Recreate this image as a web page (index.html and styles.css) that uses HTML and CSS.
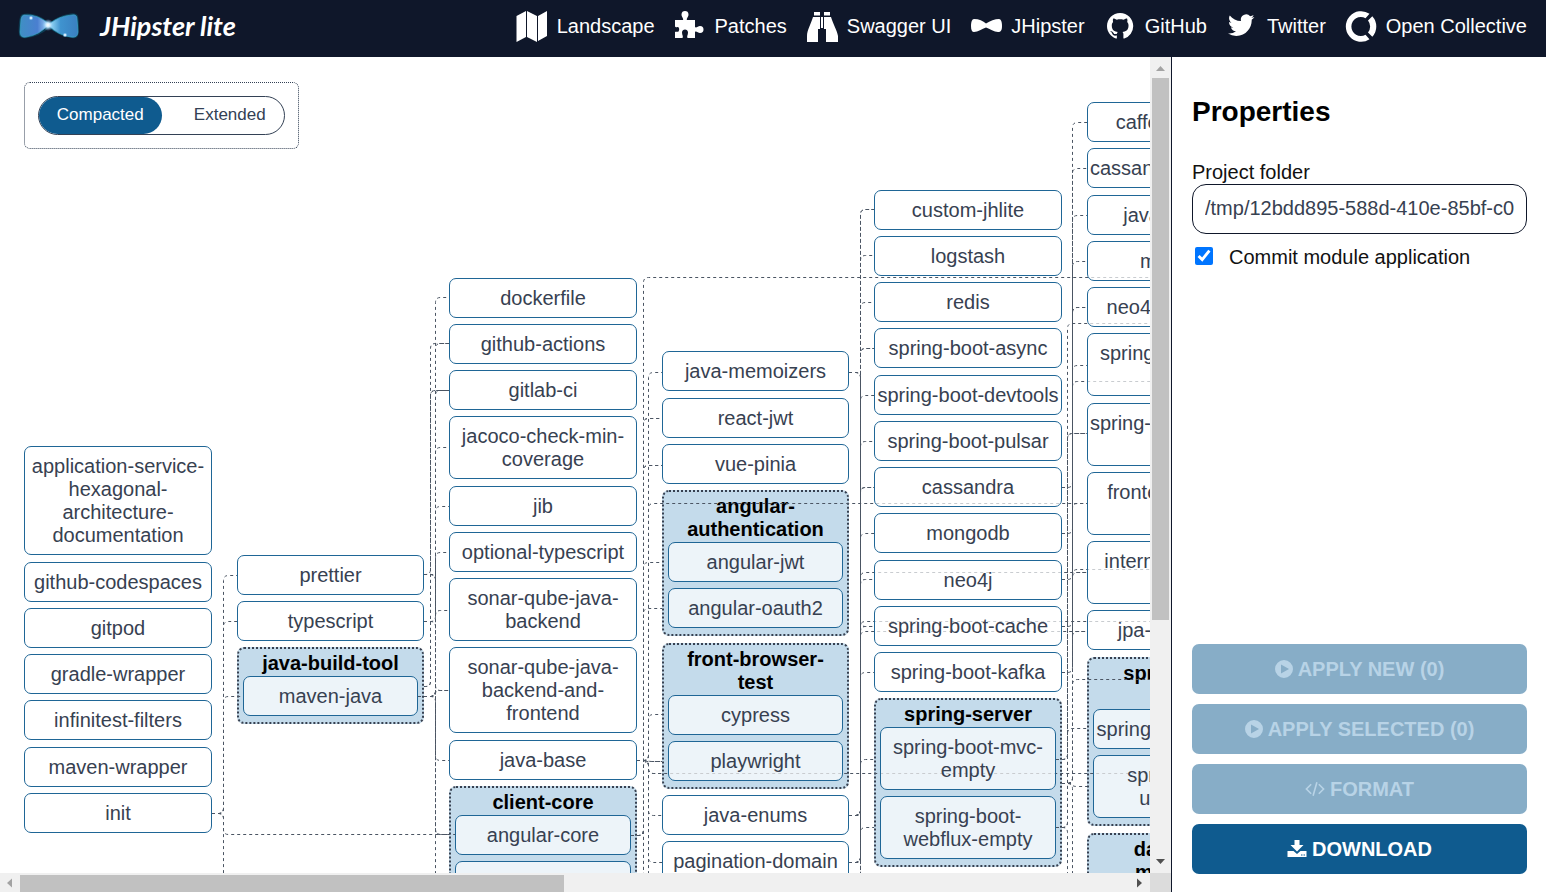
FILE: index.html
```html
<!DOCTYPE html>
<html lang="en">
<head>
<meta charset="utf-8">
<title>JHipster lite</title>
<link rel="stylesheet" href="styles.css">
</head>
<body>
<header class="header">
  <a class="brand" href="#">
    <svg class="brand-logo" viewBox="0 0 62 28" aria-hidden="true">
      <defs>
        <linearGradient id="wing-left" x1="0" y1="0" x2="1" y2="0"><stop offset="0" stop-color="#3f8fc4"/><stop offset=".6" stop-color="#4a7fd0"/><stop offset="1" stop-color="#a8d4f8"/></linearGradient>
        <linearGradient id="wing-right" x1="0" y1="0" x2="1" y2="0"><stop offset="0" stop-color="#a4e2fa"/><stop offset=".4" stop-color="#3f93cf"/><stop offset="1" stop-color="#3a7fc0"/></linearGradient>
        <radialGradient id="spark"><stop offset="0" stop-color="#fff"/><stop offset=".35" stop-color="#cdeafc"/><stop offset="1" stop-color="#6ab8f0" stop-opacity="0"/></radialGradient>
      </defs>
      <path d="M5 2Q9 1 14 2Q24 4 31 11Q40 4 50 2Q58 0 60 4Q62 14 60 23Q59 27 54 26Q42 25 31 16Q22 24 9 26Q3 27 1 23Q0 12 2 5Q3 2 5 2Z" fill="#0d4a63" opacity=".7"/>
      <path d="M6 3Q20 2 31 12Q22 23 8 25Q2 26 2 20L3 7Q4 3 6 3Z" fill="url(#wing-left)" stroke="#3aa6c8" stroke-width=".7"/>
      <path d="M31 12Q41 4 54 3Q59 2 59 7L60 20Q60 26 53 25Q40 23 31 14Z" fill="url(#wing-right)" stroke="#3aa6c8" stroke-width=".7"/>
      <circle cx="30" cy="13" r="6" fill="url(#spark)"/>
      <circle cx="13" cy="6" r="2.5" fill="url(#spark)"/>
      <circle cx="47" cy="23" r="2.5" fill="url(#spark)"/>
    </svg>
    <span class="brand-name">JHipster lite</span>
  </a>
  <nav class="menu">
    <a class="menu-link" href="#"><svg class="menu-icon" viewBox="0 0 32 32" aria-hidden="true"><path d="M0.500 6 10 1V27L0.500 32ZM11 1 21 6V32L11 27ZM22 6 31 1V26L22 31Z"/></svg>Landscape</a>
    <a class="menu-link" href="#"><svg class="menu-icon" viewBox="0 0 32 32" aria-hidden="true"><path d="M1 10H9C10 9 7.500 7 7.500 4.500C7.500 2 9 1 11 1S14.500 2 14.500 4.500C14.500 7 12 9 13 10H21V17C22 18.500 24 16 26 16C28.500 16 29.500 17.500 29.500 19.500S28.500 23 26 23C24 23 22 20.500 21 22V28H13.500C12.500 26 14 25 14 22.500C14 20.500 12.500 19.500 11 19.500S8 20.500 8 22.500C8 25 9.500 26 8.500 28H1V22C2 21 3.500 22.500 4.500 21.500C5.500 20 5.500 17.500 4 17C3 16.500 2 18 1 16.500Z"/></svg>Patches</a>
    <a class="menu-link" href="#"><svg class="menu-icon" viewBox="0 0 32 32" aria-hidden="true"><path d="M8 2H14V5.500H8ZM18 2H24V5.500H18ZM7 7H14V19H12V32H1V26C1 20 5 14 7 7ZM25 7H18V19H20V32H32V26C31 20 27 14 25 7ZM15 7H17V18H15Z"/></svg>Swagger UI</a>
    <a class="menu-link" href="#"><svg class="menu-icon" viewBox="0 0 32 32" aria-hidden="true"><path d="M4 9C9 9 13 11 16 13.500C20 11 25 9 29 9C31 9 32 12 32 16S31 22 28 22C24 22 20 19 16 17.500C12 19 8 22 4 22C2 22 1 20 1 16S2 9 4 9Z"/></svg>JHipster</a>
    <a class="menu-link" href="#"><svg class="menu-icon" viewBox="0 0 32 32" aria-hidden="true"><path transform="translate(3 3) scale(1.640)" d="M8 0C3.580 0 0 3.580 0 8c0 3.540 2.290 6.530 5.470 7.590.4.070.55-.17.55-.38 0-.19-.01-.82-.01-1.490-2.010.37-2.530-.49-2.690-.94-.09-.23-.48-.94-.82-1.130-.28-.15-.68-.52-.01-.53.63-.01 1.080.58 1.230.82.72 1.210 1.870.87 2.330.66.07-.52.28-.87.51-1.070-1.780-.2-3.640-.89-3.640-3.950 0-.87.31-1.590.82-2.150-.08-.2-.36-1.020.08-2.120 0 0 .67-.21 2.200.82.64-.18 1.320-.27 2-.27s1.360.09 2 .27c1.530-1.040 2.200-.82 2.200-.82.44 1.100.16 1.920.08 2.120.51.56.82 1.270.82 2.150 0 3.070-1.870 3.750-3.650 3.950.29.25.54.73.54 1.480 0 1.070-.01 1.930-.01 2.200 0 .21.15.46.55.38A8.010 8.010 0 0 0 16 8c0-4.420-3.580-8-8-8Z"/></svg>GitHub</a>
    <a class="menu-link" href="#"><svg class="menu-icon" viewBox="0 0 32 32" aria-hidden="true"><path transform="translate(2 2) scale(1.100)" d="M23.950 4.570a10 10 0 0 1-2.820.770 4.960 4.960 0 0 0 2.160-2.720 9.900 9.900 0 0 1-3.120 1.190 4.920 4.920 0 0 0-8.380 4.480C7.690 8.090 4.070 6.130 1.640 3.160a4.820 4.820 0 0 0-.67 2.480c0 1.710.87 3.210 2.190 4.100a4.900 4.900 0 0 1-2.230-.62v.06a4.920 4.920 0 0 0 3.950 4.830 5 5 0 0 1-2.210.080 4.940 4.940 0 0 0 4.600 3.420A9.870 9.870 0 0 1 0 19.540a14 14 0 0 0 7.550 2.210c9.050 0 14-7.500 14-13.980 0-.21 0-.42-.02-.63a9.940 9.940 0 0 0 2.460-2.550z"/></svg>Twitter</a>
    <a class="menu-link" href="#"><svg class="menu-icon" viewBox="0 0 32 32" aria-hidden="true"><path d="M24.500 3.700 20.500 8.200A9.500 9.500 0 1 0 20.500 24.800L24.500 29.300A15.300 15.300 0 1 1 24.500 3.700ZM27.300 6.200A15.300 15.300 0 0 1 27.300 26.800L23 22.500A9.500 9.500 0 0 0 23 10.500Z"/></svg>Open Collective</a>
  </nav>
</header>
<div class="layout">
  <main class="landscape">
    <div class="canvas" id="canvas">
      <svg class="links" id="links" aria-hidden="true"></svg>
      <div class="mode">
        <div class="mode-switch">
          <button class="mode-button mode-button-on" type="button" aria-pressed="true">Compacted</button>
          <button class="mode-button" type="button" aria-pressed="false">Extended</button>
        </div>
      </div>
    </div>
    <div class="bar bar-vertical" aria-hidden="true">
      <svg class="arrow arrow-idle" viewBox="0 0 21 21"><path d="M6 14 10.500 9 15 14Z"/></svg>
      <div class="track"><div class="thumb"></div></div>
      <svg class="arrow" viewBox="0 0 21 21"><path d="M6 7 10.500 12 15 7Z"/></svg>
    </div>
    <div class="bar bar-horizontal" aria-hidden="true">
      <svg class="arrow arrow-idle" viewBox="0 0 20 19"><path d="M12 5.500 7 10 12 14.500Z"/></svg>
      <div class="track"><div class="thumb"></div></div>
      <svg class="arrow" viewBox="0 0 20 19"><path d="M7 5.500 12 10 7 14.500Z"/></svg>
    </div>
    <div class="bar-corner"></div>
  </main>
  <aside class="properties">
    <h2 class="properties-title">Properties</h2>
    <label class="field-label" for="folder">Project folder</label>
    <input class="field" id="folder" type="text" value="/tmp/12bdd895-588d-410e-85bf-c0">
    <div class="check">
      <input class="check-box" id="commit" type="checkbox" checked>
      <label for="commit">Commit module application</label>
    </div>
    <div class="actions">
      <button class="action" type="button" disabled><svg class="action-icon" viewBox="0 0 18 18" aria-hidden="true"><path fill-rule="evenodd" d="M9 0A9 9 0 1 0 9 18A9 9 0 0 0 9 0ZM6 4.500 14 9 6 13.500Z"/></svg>APPLY NEW (0)</button>
      <button class="action" type="button" disabled><svg class="action-icon" viewBox="0 0 18 18" aria-hidden="true"><path fill-rule="evenodd" d="M9 0A9 9 0 1 0 9 18A9 9 0 0 0 9 0ZM6 4.500 14 9 6 13.500Z"/></svg>APPLY SELECTED (0)</button>
      <button class="action" type="button" disabled><svg class="action-icon action-icon-wide" viewBox="0 0 21 18" aria-hidden="true"><path fill="none" stroke="currentColor" stroke-width="1.700" d="M6.500 4 1.500 9 6.500 14M14.500 4 19.500 9 14.500 14M12.500 2 8.500 16"/></svg>FORMAT</button>
      <button class="action" type="button"><svg class="action-icon action-icon-wide" viewBox="0 0 20 18" aria-hidden="true"><path fill-rule="evenodd" d="M7.500 0H12.500V5H16.500L10 11.500 3.500 5H7.500ZM0.500 11H6.500L10 14 13.500 11H19.500V17H0.500ZM14 14.500V15.500H15.500V14.500ZM16.500 14.500V15.500H18V14.500Z"/></svg>DOWNLOAD</button>
    </div>
  </aside>
</div>
<script src="landscape.js"></script>
</body>
</html>
```
FILE: styles.css
```css
* {
  box-sizing: border-box;
}

body {
  margin: 0;
  height: 100vh;
  display: flex;
  flex-direction: column;
  overflow: hidden;
  background: #fff;
  color: #111;
  font: 20px/23px "Liberation Sans", Arial, sans-serif;
}

button,
input {
  font: inherit;
}

.header {
  flex: none;
  height: 57px;
  padding: 0 19px 5px 18px;
  display: flex;
  align-items: center;
  justify-content: space-between;
  background: #0f172a;
}

.brand {
  display: flex;
  align-items: center;
  gap: 20px;
  color: #fff;
  text-decoration: none;
}

.brand-logo {
  width: 62px;
  height: 28px;
}

.brand-name {
  font: italic 700 27px/32px Lato, sans-serif;
}

.menu {
  display: flex;
  gap: 19px;
}

.menu-link {
  display: flex;
  align-items: center;
  gap: 9px;
  color: #fff;
  text-decoration: none;
}

.menu-icon {
  width: 32px;
  height: 32px;
  fill: #fff;
}

.layout {
  flex: 1;
  min-height: 0;
  display: flex;
}

.landscape {
  flex: 1;
  min-width: 0;
  display: grid;
  grid-template-columns: minmax(0, 1fr) 21px;
  grid-template-rows: minmax(0, 1fr) 19px;
}

.canvas {
  position: relative;
  overflow: hidden;
}

.mode {
  width: fit-content;
  margin: 25px 24px;
  padding: 13px;
  border: 1px dotted #334155;
  border-radius: 6px;
}

.mode-switch {
  display: flex;
  width: 247px;
  height: 39px;
  border: 1px solid #334155;
  border-radius: 20px;
}

.mode-button {
  width: 50%;
  padding: 0 0 2px 14px;
  border: 0;
  border-radius: 20px;
  background: none;
  color: #334155;
  font-size: 17px;
}

.mode-button-on {
  padding: 0 0 2px;
  background: #0f5b8f;
  color: #fff;
}

.links {
  position: absolute;
  inset: 0;
  z-index: 1;
  width: 100%;
  height: 100%;
  fill: none;
  stroke: #4b5563;
  stroke-width: 1px;
  stroke-dasharray: 3 3;
}

.module {
  z-index: 2;
  padding: 8px 0 7px;
  border: 1px solid #1f6696;
  border-radius: 7px;
  background: rgba(255, 255, 255, 0.7);
  color: #374151;
  text-align: center;
}

.node {
  position: absolute;
}

.feature {
  display: flex;
  flex-direction: column;
  gap: 6px;
  padding: 3px 4px 6px;
  border: 2px dotted #374151;
  border-radius: 7px;
  background: #c4dbeb;
}

.feature .module {
  position: relative;
}

.feature-name {
  margin: 0 0 -5px;
  padding: 0 12px;
  color: #000;
  font-size: 20px;
  line-height: 23px;
  text-align: center;
}

.bar {
  display: flex;
  background: #f0f0f0;
}

.bar-vertical {
  flex-direction: column;
  grid-area: 1 / 2;
}

.bar-horizontal {
  grid-area: 2 / 1;
}

.bar-corner {
  grid-area: 2 / 2;
  background: #dcdcdc;
}

.arrow {
  flex: none;
  width: 21px;
  height: 21px;
  fill: #505050;
}

.bar-horizontal .arrow {
  width: 20px;
  height: 19px;
}

.arrow-idle {
  fill: #a3a3a3;
}

.track {
  flex: 1;
}

.thumb {
  background: #c1c1c1;
}

.bar-vertical .thumb {
  width: 17px;
  height: 70%;
  margin-left: 2px;
}

.bar-horizontal .thumb {
  width: 49%;
  height: 17px;
  margin-top: 2px;
}

.properties {
  flex: none;
  width: 375px;
  display: flex;
  flex-direction: column;
  padding: 38px 19px 18px 20px;
  border-left: 1px solid #0f172a;
}

.properties-title {
  margin: 0 0 32px;
  font-size: 28px;
  line-height: 34px;
  color: #000;
}

.field {
  width: 100%;
  height: 50px;
  padding: 0 12px 2px;
  border: 1px solid #0f172a;
  border-radius: 14px;
  background: #fff;
  color: #374151;
}

.check {
  display: flex;
  align-items: center;
  gap: 16px;
  margin-top: 12px;
}

.check-box {
  width: 18px;
  height: 18px;
  margin: 0 0 3px 3px;
  accent-color: #0075ff;
}

.actions {
  display: flex;
  flex-direction: column;
  gap: 10px;
  margin-top: auto;
}

.action {
  height: 50px;
  display: flex;
  align-items: center;
  justify-content: center;
  gap: 5px;
  padding: 0;
  border: 0;
  border-radius: 7px;
  background: #0f5b8f;
  color: #fff;
  font-weight: 700;
}

.action:disabled {
  background: #87adc7;
  color: #b8d3e6;
}

.action-icon {
  width: 18px;
  height: 18px;
  fill: currentColor;
}

.action-icon-wide {
  width: 20px;
}
```
FILE: landscape.js
```js
const canvas = document.getElementById('canvas');
const links = document.getElementById('links');

// Each level: left edge, width, then its elements as [top, name] or [top, feature name, modules].
const levels = [
  [24, 188, [
    [389, 'application-service-hexagonal-architecture-documentation'],
    [505, 'github-codespaces'], [551, 'gitpod'], [597, 'gradle-wrapper'],
    [643, 'infinitest-filters'], [690, 'maven-wrapper'], [736, 'init'],
  ]],
  [237, 187, [
    [498, 'prettier'], [544, 'typescript'],
    [590, 'java-build-tool', ['maven-java']],
  ]],
  [449, 188, [
    [221, 'dockerfile'], [267, 'github-actions'], [313, 'gitlab-ci'],
    [359, 'jacoco-check-min-coverage'], [429, 'jib'], [475, 'optional-typescript'],
    [521, 'sonar-qube-java-backend'], [590, 'sonar-qube-java-backend-and-frontend'],
    [683, 'java-base'],
    [729, 'client-core', ['angular-core', 'react-core']],
  ]],
  [662, 187, [
    [294, 'java-memoizers'], [341, 'react-jwt'], [387, 'vue-pinia'],
    [433, 'angular-authentication', ['angular-jwt', 'angular-oauth2']],
    [586, 'front-browser-test', ['cypress', 'playwright']],
    [738, 'java-enums'], [784, 'pagination-domain'],
  ]],
  [874, 188, [
    [133, 'custom-jhlite'], [179, 'logstash'], [225, 'redis'], [271, 'spring-boot-async'],
    [318, 'spring-boot-devtools'], [364, 'spring-boot-pulsar'], [410, 'cassandra'],
    [456, 'mongodb'], [503, 'neo4j'], [549, 'spring-boot-cache'], [595, 'spring-boot-kafka'],
    [641, 'spring-server', ['spring-boot-mvc-empty', 'spring-boot-webflux-empty']],
  ]],
  [1087, 187, [
    [45, 'caffeine-cache'], [91, 'cassandra-migration'], [138, 'java-archunit'],
    [184, 'mongock'], [230, 'neo4j-migrations'], [276, 'spring-boot-kafka-akhq'],
    [346, 'spring-boot-webflux-client'], [415, 'frontend-maven-plugin'],
    [484, 'internationalized-errors'], [553, 'jpa-postgresql'],
    [600, 'spring-mvc-client', ['spring-boot-oauth2', 'spring-boot-undertow']],
    [776, 'database-migration', ['flyway', 'liquibase']],
  ]],
];

// Links as [start x, start y, bend x, end x, [end y, ...]].
const connections = [
  [212, 756, 223, 237, [518, 564]],
  [212, 756, 223, 242, [639]],
  [212, 756, 223, 455, [777, 850]],
  [418, 639, 435, 449, [240, 286, 333, 390, 449, 553, 633, 703]],
  [424, 629, 430, 449, [286, 333]],
  [424, 517, 430, 449, [333]],
  [424, 517, 435, 449, [633, 777, 850]],
  [424, 564, 435, 449, [495, 777]],
  [631, 778, 643, 1160, [220]],
  [631, 778, 643, 662, [361, 408, 505, 551, 704]],
  [631, 850, 643, 662, [361, 408]],
  [637, 703, 648, 662, [315, 657, 704, 716, 758, 805, 850]],
  [637, 703, 648, 1087, [446]],
  [637, 703, 648, 1160, [716]],
  [849, 315, 860, 874, [569, 850]],
  [849, 758, 860, 874, [152, 198, 245, 291, 338, 384, 430, 476, 522]],
  [849, 805, 860, 874, [152, 291, 430, 569, 615, 702, 770]],
  [849, 850, 860, 1087, [515, 574]],
  [849, 850, 860, 1160, [564]],
  [1062, 430, 1072, 1087, [111]],
  [1062, 476, 1072, 1087, [204]],
  [1062, 522, 1072, 1087, [250]],
  [1062, 569, 1072, 1087, [65]],
  [1062, 615, 1072, 1160, [324]],
  [1062, 726, 1072, 1087, [158, 250, 308, 446, 515, 574, 729, 850]],
  [1062, 726, 1072, 1160, [622, 512]],
  [1056, 702, 1067, 1087, [376, 671]],
  [1056, 770, 1067, 1160, [266]],
  [1056, 770, 1067, 1087, [376, 850]],
];

function addModule(parent, name) {
  const module = document.createElement('div');
  module.className = 'module';
  module.textContent = name;
  parent.append(module);
  return module;
}

function addFeature(name, modules) {
  const feature = document.createElement('div');
  feature.className = 'feature';
  const title = document.createElement('h3');
  title.className = 'feature-name';
  title.textContent = name;
  feature.append(title);
  modules.forEach(module => addModule(feature, module));
  canvas.append(feature);
  return feature;
}

for (const [left, width, elements] of levels) {
  for (const [top, name, modules] of elements) {
    const element = modules ? addFeature(name, modules) : addModule(canvas, name);
    element.classList.add('node');
    element.style.left = left + 'px';
    element.style.top = top + 'px';
    element.style.width = width + 'px';
  }
}

for (const [x, y, bend, end, targets] of connections) {
  for (const target of targets) {
    const radius = Math.min(5, Math.abs(target - y) / 2) * Math.sign(target - y);
    const path = document.createElementNS('http://www.w3.org/2000/svg', 'path');
    path.setAttribute('d',
      `M${x} ${y + 0.5}H${bend - 4.5}Q${bend + 0.5} ${y + 0.5} ${bend + 0.5} ${y + 0.5 + radius}` +
      `V${target + 0.5 - radius}Q${bend + 0.5} ${target + 0.5} ${bend + 5.5} ${target + 0.5}H${end}`);
    links.append(path);
  }
}
```
